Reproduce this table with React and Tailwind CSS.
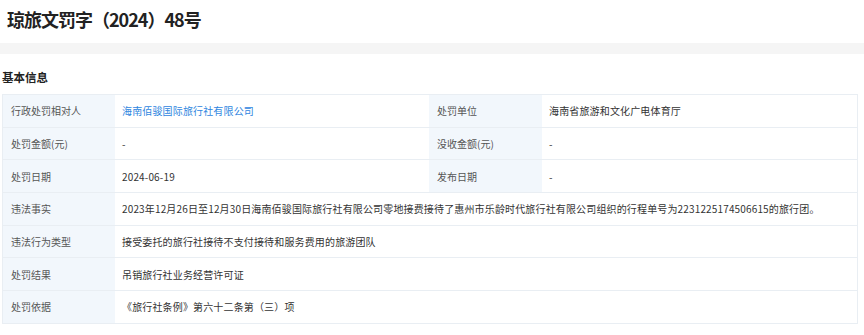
const rows = [
  { label: "行政处罚相对人", value: "海南佰骏国际旅行社有限公司", link: true, label2: "处罚单位", value2: "海南省旅游和文化广电体育厅" },
  { label: "处罚金额(元)", value: "-", label2: "没收金额(元)", value2: "-" },
  { label: "处罚日期", value: "2024-06-19", label2: "发布日期", value2: "-" },
  { label: "违法事实", value: "2023年12月26日至12月30日海南佰骏国际旅行社有限公司零地接费接待了惠州市乐龄时代旅行社有限公司组织的行程单号为2231225174506615的旅行团。" },
  { label: "违法行为类型", value: "接受委托的旅行社接待不支付接待和服务费用的旅游团队" },
  { label: "处罚结果", value: "吊销旅行社业务经营许可证" },
  { label: "处罚依据", value: "《旅行社条例》第六十二条第（三）项" },
];

function Label({ children }) {
  return (
    <div className="h-[32.7px] flex items-center pl-[8px] bg-[#f2f7fc] text-[#555] border-b border-[#e9eef3]">
      {children}
    </div>
  );
}

function Value({ children, link, wide }) {
  return (
    <div
      className={
        "h-[32.7px] flex items-center pl-[7px] border-b border-[#e9eef3] whitespace-nowrap tracking-[0.15px] " +
        (wide ? "col-span-3 " : "") +
        (link ? "text-[#2f86e0]" : "text-[#333]")
      }
    >
      {children}
    </div>
  );
}

export default function App() {
  return (
    <div
      className="w-[864px] h-[335px] bg-white overflow-hidden"
      style={{ fontFamily: '"Microsoft YaHei", "Noto Sans CJK SC", "Noto Sans", sans-serif' }}
    >
      <div className="h-[43px] flex items-center pl-[7px] pb-[4px]">
        <h1 className="text-[18px] font-bold text-[#222] tracking-[-1px]">琼旅文罚字（2024）48号</h1>
      </div>
      <div className="h-[11px] bg-[#f5f5f5]" />
      <div className="h-[40px] flex items-center pl-[2px] pt-[8px]">
        <h2 className="text-[11.5px] font-bold text-[#222]">基本信息</h2>
      </div>
      <div className="ml-[2px] w-[856px] border border-b-0 border-[#e9eef3] grid grid-cols-[112px_314px_113px_1fr] text-[10px]">
        {rows.map((r) =>
          r.label2 ? (
            <div key={r.label} className="contents">
              <Label>{r.label}</Label>
              <Value link={r.link}>{r.value}</Value>
              <Label>{r.label2}</Label>
              <Value>{r.value2}</Value>
            </div>
          ) : (
            <div key={r.label} className="contents">
              <Label>{r.label}</Label>
              <Value wide>{r.value}</Value>
            </div>
          )
        )}
      </div>
    </div>
  );
}
